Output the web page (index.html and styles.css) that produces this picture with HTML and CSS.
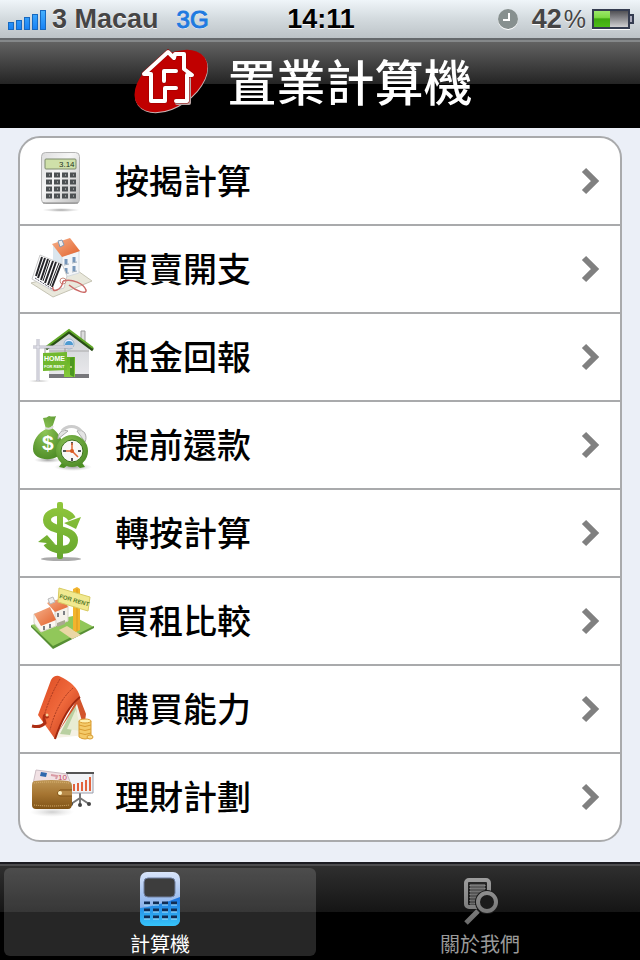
FILE: index.html
```
<!DOCTYPE html>
<html lang="zh-Hant">
<head>
    <meta charset="utf-8">
    <meta name="viewport" content="width=device-width, initial-scale=1">
    <title>置業計算機</title>
    <link rel="stylesheet" href="styles.css">
</head>
<body>
    <div class="status-bar">
        <div class="status-left">
            <svg class="signal" width="38" height="21" viewBox="0 0 38 21">
                <g fill="url(#signalFill)" stroke="#1769c0">
                    <rect x=".5" y="13.500" width="5" height="7"/>
                    <rect x="8.500" y="11.500" width="5" height="9"/>
                    <rect x="16.500" y="8.500" width="5" height="12"/>
                    <rect x="24.500" y="5.500" width="5" height="15"/>
                    <rect x="32.500" y="1.500" width="5" height="19"/>
                </g>
                <defs><linearGradient id="signalFill" gradientUnits="userSpaceOnUse" x1="0" y1="0" x2="0" y2="21"><stop offset="0" stop-color="#49b4ff"/><stop offset="1" stop-color="#1680f4"/></linearGradient></defs>
            </svg>
            <div class="carrier">3 Macau<span class="network">3G</span></div>
        </div>
        <div class="status-time">14:11</div>
        <div class="status-right">
            <svg width="20" height="21" viewBox="0 0 20 21">
                <circle cx="10" cy="11" r="10" fill="#fff"/>
                <circle cx="10" cy="10" r="10" fill="#87908f"/>
                <path d="M11 4v7H5" fill="none" stroke="#fff" stroke-width="2"/>
            </svg>
            <span class="battery-level">42<span class="percent">%</span></span>
            <svg class="battery" width="42" height="21" viewBox="0 0 42 21">
                <defs>
                    <linearGradient id="batGreen" x1="0" y1="0" x2="0" y2="1"><stop offset="0" stop-color="#9be76a"/><stop offset=".4" stop-color="#7fdc44"/><stop offset=".5" stop-color="#3ea90f"/><stop offset="1" stop-color="#4dbd18"/></linearGradient>
                    <linearGradient id="batGray" x1="0" y1="0" x2="0" y2="1"><stop offset="0" stop-color="#4a4a4e"/><stop offset=".5" stop-color="#8e8e92"/><stop offset="1" stop-color="#d8d8da"/></linearGradient>
                </defs>
                <rect x="1" y="1" width="36" height="18" fill="url(#batGray)" stroke="#343c50" stroke-width="2"/>
                <rect x="2" y="2" width="16" height="16" fill="url(#batGreen)"/>
                <path d="M38 6h3v8h-3" fill="#aab" stroke="#343c50" stroke-width="2"/>
                <path d="M0 20.500h38" stroke="#fff"/>
            </svg>
        </div>
    </div>

    <header class="title-bar">
        <svg width="80" height="72" viewBox="0 0 80 72">
            <ellipse cx="40.500" cy="38" rx="41" ry="25" transform="rotate(-35 40.500 38)" fill="#c9b5b5"/>
            <ellipse cx="40" cy="37" rx="41" ry="25" transform="rotate(-35 40 37)" fill="#c00000"/>
            <g fill="none" stroke-linejoin="round" stroke-linecap="round">
                <path d="M46 59h12V33" stroke="#b9a5a5" stroke-width="4"/>
                <g stroke="#900" stroke-width="5">
                    <path d="M45 44H34v13H20V30h-7L37 8l6 6 1-4h9v15l8 6h-5v26H45"/>
                    <path d="M45 27H33v10"/>
                </g>
                <g stroke="#fff" stroke-width="4">
                    <path d="M45 44H34v13H20V30h-7L37 8l6 6 1-4h9v15l8 6h-5v26H45"/>
                    <path d="M45 27H33v10"/>
                </g>
            </g>
        </svg>
        <h1>置業計算機</h1>
    </header>

    <main>
        <ul class="menu">
            <li><a href="#">
                <svg class="icon" viewBox="0 0 64 64">
                    <defs>
                        <linearGradient id="calcBody" x1="0" y1="0" x2="1" y2="1"><stop offset="0" stop-color="#ddd"/><stop offset=".4" stop-color="#f6f6f6"/><stop offset="1" stop-color="#bdbdbd"/></linearGradient>
                        <radialGradient id="shade"><stop offset="0" stop-color="#777" stop-opacity=".7"/><stop offset="1" stop-color="#aaa" stop-opacity="0"/></radialGradient>
                    </defs>
                    <ellipse cx="30" cy="61" rx="19" ry="2" fill="url(#shade)"/>
                    <rect x="10.500" y="3.500" width="38" height="51" rx="4" fill="url(#calcBody)" stroke="#b5b5b5"/>
                    <path d="M12 54h35" stroke="#888"/>
                    <rect x="14" y="10" width="31" height="10" rx="1" fill="#cfe0a9" stroke="#7c8a6c"/>
                    <text x="28" y="18" class="lcd">3.14</text>
                    <g stroke="#4c5052" stroke-width="5" stroke-dasharray="6 2">
                        <path d="M15 26h30M15 33h30M15 40h30M15 47h30"/>
                    </g>
                    <g stroke="#ccc" stroke-width="1" stroke-dasharray="1 7">
                        <path d="M18 26h27M18 33h27M18 40h27M18 47h27"/>
                    </g>
                </svg>
                <span>按揭計算</span>
                <svg class="chevron" viewBox="0 0 18 26"><path d="M2 2l11 11L2 24"/></svg>
            </a></li>
            <li><a href="#">
                <svg class="icon" viewBox="0 0 64 64">
                    <defs><linearGradient id="roof" x1="0" y1="0" x2="1" y2="1"><stop offset="0" stop-color="#f6b08a"/><stop offset="1" stop-color="#e2622c"/></linearGradient></defs>
                    <path d="M0 46l22 14 39-16-14-10z" fill="#e9e8dc" stroke="#c6c4b4"/>
                    <path d="M22 8v18l9 14V19z" fill="#dbe6ee"/>
                    <path d="M31 19l17-5v22l-17 5z" fill="#f3f5f8" stroke="#d3dae0"/>
                    <path d="M21 7l18-6 10 13-18 6z" fill="url(#roof)"/>
                    <path d="M27 4l4-1 2 5-4 2z" fill="#eee" stroke="#8499b5"/>
                    <path d="M35 22v5M43 20v5M35 31v5M43 29v5" stroke="#7696b9" stroke-width="3"/>
                    <path d="M33 28l5-1M41 26l5-1M33 37l5-1M41 35l5-1" stroke="#9cabba"/>
                    <path d="M9 18l22 9 5 12-3 12-11 3L1 42z" fill="#fff" stroke="#ccc"/>
                    <path d="M11 20L5 39M14 21L7 41M17 22L10 43M22 24L14 46M25 25L17 48M30 27L21 50" stroke="#242428" stroke-width="2"/>
                    <path d="M19 23l-7 21M28 26l-9 23" stroke="#242428"/>
                    <path d="M4 41l17 11" stroke="#556" stroke-dasharray="2 1"/>
                    <circle cx="32" cy="44" r="3" fill="#fff" stroke="#c98d80"/>
                    <path d="M32 44c-1 10-12 12-10 6M32 44c9-3 21 3 23 9 1 5-10 1-17-5" fill="none" stroke="#cc6b68" stroke-width="1.500"/>
                </svg>
                <span>買賣開支</span>
                <svg class="chevron" viewBox="0 0 18 26"><path d="M2 2l11 11L2 24"/></svg>
            </a></li>
            <li><a href="#">
                <svg class="icon" viewBox="0 0 64 64">
                    <defs>
                        <linearGradient id="wall" x1="0" y1="0" x2="0" y2="1"><stop offset="0" stop-color="#cdd0d4"/><stop offset="1" stop-color="#e9e9ec"/></linearGradient>
                        <linearGradient id="green" x1="0" y1="0" x2="0" y2="1"><stop offset="0" stop-color="#64b01f"/><stop offset="1" stop-color="#86cb3c"/></linearGradient>
                    </defs>
                    <ellipse cx="8" cy="56" rx="12" ry="1" fill="url(#shade)"/>
                    <path d="M50 6h4v14l-4-4z" fill="#ddd" stroke="#999"/>
                    <path d="M18 23L38 7l20 16v28H18z" fill="url(#wall)"/>
                    <path d="M18 26h40" stroke="#aaa"/>
                    <path d="M18 49h40v4H18z" fill="#77777b"/>
                    <path d="M15 24L38 7l24 18" fill="none" stroke="#284e16" stroke-width="3"/>
                    <path d="M15 22L38 5l24 18" fill="none" stroke="#61a828" stroke-width="2"/>
                    <circle cx="38" cy="19" r="5" fill="#eef" stroke="#94b5cc"/>
                    <path d="M34 20a4 4 0 0 1 8 0z" fill="#4e9bd0"/>
                    <path d="M33 32h11v20H33z" fill="url(#green)"/>
                    <path d="M39 33l4-1v20l-4-2z" fill="#4c9720"/>
                    <circle cx="40" cy="42" r="1" fill="#dd9"/>
                    <path d="M7 14v42M2 22h40" stroke="#b6b6c2" stroke-width="3"/>
                    <path d="M7 14v42M2 22h40" stroke="#eeeef5"/>
                    <path d="M14 23v5M34 23v5" stroke="#999"/>
                    <path d="M12 28l24-1v18l-24 1z" fill="#71b82e"/>
                    <text x="13" y="36" class="home-text">HOME</text>
                    <text x="13" y="43" class="rent-text">FOR RENT</text>
                </svg>
                <span>租金回報</span>
                <svg class="chevron" viewBox="0 0 18 26"><path d="M2 2l11 11L2 24"/></svg>
            </a></li>
            <li><a href="#">
                <svg class="icon" viewBox="0 0 64 64">
                    <defs>
                        <radialGradient id="bag" cx=".4" cy=".35" r=".7"><stop offset="0" stop-color="#8fc657"/><stop offset="1" stop-color="#4d8b26"/></radialGradient>
                    </defs>
                    <ellipse cx="17" cy="47" rx="14" ry="3" fill="url(#shade)"/>
                    <ellipse cx="42" cy="54" rx="19" ry="4" fill="url(#shade)"/>
                    <path d="M12 5q4 0 6-2 4 1 7 0l-4 12c6 4 11 12 11 19 0 16-30 16-30 2 0-9 5-16 13-20z" fill="url(#bag)"/>
                    <path d="M14 15q6 2 8-2" fill="none" stroke="#ddd" stroke-width="2"/>
                    <text x="11" y="37" class="bag-dollar">$</text>
                    <g fill="#e4e4e4" stroke="#aaa">
                        <path d="M27 26c0-7 5-10 10-8zM46 18c7-3 11 5 8 11z"/>
                        <path d="M31 18c5-6 14-6 19 0" fill="none" stroke="#ccc" stroke-width="3"/>
                    </g>
                    <path d="M28 54l4-6 5 4-4 3zM54 54l-4-6-5 4 4 3z" fill="#4c9022"/>
                    <circle cx="41" cy="38" r="16" fill="url(#bag)"/>
                    <circle cx="41" cy="38" r="11" fill="#f8f8f6" stroke="#39721a"/>
                    <path d="M41 29v3M41 45v3M32 38h3M47 38h3" stroke="#555" stroke-width="2"/>
                    <path d="M41 38V30M41 38l6 6M41 38h-6" stroke="#df6836" stroke-width="1.500"/>
                    <circle cx="41" cy="38" r="2" fill="#d85a20"/>
                </svg>
                <span>提前還款</span>
                <svg class="chevron" viewBox="0 0 18 26"><path d="M2 2l11 11L2 24"/></svg>
            </a></li>
            <li><a href="#">
                <svg class="icon" viewBox="0 0 64 64">
                    <defs><linearGradient id="dollar" gradientUnits="userSpaceOnUse" x1="0" y1="0" x2="0" y2="60"><stop offset="0" stop-color="#92c83c"/><stop offset="1" stop-color="#63a42d"/></linearGradient></defs>
                    <ellipse cx="30" cy="58" rx="20" ry="2" fill="#aaa"/>
                    <rect x="26" y="1" width="6" height="57" rx="2" fill="url(#dollar)"/>
                    <path d="M41 18C36 8 16 9 16 19c0 12 27 8 27 20 0 13-21 12-27 3" fill="none" stroke="url(#dollar)" stroke-width="8"/>
                    <path d="M33 22l17-6-5 12zM7 41l9-7 8 9z" fill="url(#dollar)"/>
                </svg>
                <span>轉按計算</span>
                <svg class="chevron" viewBox="0 0 18 26"><path d="M2 2l11 11L2 24"/></svg>
            </a></li>
            <li><a href="#">
                <svg class="icon" viewBox="0 0 64 64">
                    <path d="M0 36l22 23 41-21-21-11z" fill="#91c75a"/>
                    <path d="M0 36l22 21 41-20v2L22 60 0 38z" fill="#578f34"/>
                    <path d="M28 41l8-4 14 9-9 4z" fill="#ead7a5"/>
                    <path d="M17 13l7 9v15l13-5V17l-5-6z" fill="#f4f1ea" stroke="#d8d2c8"/>
                    <path d="M3 25v9l7 9 15-6V31L19 20z" fill="#faf7f1" stroke="#d8d2c8"/>
                    <path d="M3 25l16-7 6 13-15 6z" fill="url(#roof)"/>
                    <path d="M16 14l15-5 6 9-13 5z" fill="url(#roof)"/>
                    <path d="M17 10l5-2 2 5-5 2z" fill="#eee" stroke="#bbb"/>
                    <path d="M13 37v4M19 35v4M27 24v4M33 22v4" stroke="#7c8085" stroke-width="2"/>
                    <path d="M26 34l8-3v4l-8 3z" fill="#aaa890"/>
                    <path d="M42 0l4-2 3 2v41l-4 2-3-2z" fill="#f2b42d"/>
                    <path d="M46 0v42" stroke="#d99820"/>
                    <path d="M28-1l31 9-2 14-30-9z" fill="#f1e990" stroke="#d8cb62"/>
                    <text x="28" y="9" class="sale-text" transform="rotate(16 28 9)">FOR RENT</text>
                </svg>
                <span>買租比較</span>
                <svg class="chevron" viewBox="0 0 18 26"><path d="M2 2l11 11L2 24"/></svg>
            </a></li>
            <li><a href="#">
                <svg class="icon" viewBox="0 0 64 64">
                    <defs><linearGradient id="purse" x1="0" y1="0" x2="1" y2="1"><stop offset="0" stop-color="#d94820"/><stop offset=".5" stop-color="#f0693c"/><stop offset="1" stop-color="#b52f12"/></linearGradient></defs>
                    <path d="M24 61l25-39 6 36z" fill="#f4f1e4"/>
                    <path d="M29 57l15-30 2 8-7 23z" fill="#b9d0a1"/>
                    <path d="M36 52l9-20 5 22z" fill="#e8ecd2"/>
                    <path d="M48 19l7 18-2 14-7-24-20 30z" fill="#d3552c"/>
                    <path d="M20 3q3-5 8-4 18 8 21 21-15 12-25 42L7 38z" fill="url(#purse)"/>
                    <path d="M49 20Q34 32 24 62" fill="none" stroke="#a1280e" stroke-width="2"/>
                    <path d="M29 2Q18 20 12 43M42 11Q26 25 19 53" fill="none" stroke="#a83a20" stroke-dasharray="2 1"/>
                    <path d="M17 41q-4-6-4 1l1 4q-4 5-13 3" fill="none" stroke="#ad2e14" stroke-width="3"/>
                    <circle cx="16" cy="38" r="1.500" fill="#f6d199"/>
                    <g fill="#f4ca69" stroke="#d99c31">
                        <path d="M48 44h12v16q-6 4-12 0z"/>
                        <ellipse cx="54" cy="44" rx="6" ry="2" fill="#fff0b0"/>
                        <path d="M48 48q6 3 12 0M48 52q6 3 12 0M48 56q6 3 12 0" fill="none"/>
                        <ellipse cx="59" cy="60" rx="3" ry="2" fill="#f9dc8c"/>
                    </g>
                </svg>
                <span>購買能力</span>
                <svg class="chevron" viewBox="0 0 18 26"><path d="M2 2l11 11L2 24"/></svg>
            </a></li>
            <li><a href="#">
                <svg class="icon" viewBox="0 0 64 64">
                    <defs><linearGradient id="wallet" x1="0" y1="0" x2="0" y2="1"><stop offset="0" stop-color="#bd9554"/><stop offset=".5" stop-color="#a57431"/><stop offset="1" stop-color="#805316"/></linearGradient></defs>
                    <ellipse cx="21" cy="47" rx="22" ry="5" fill="url(#shade)" opacity=".5"/>
                    <path d="M49 28v5l-9 6M49 33l9 6M49 32v7" fill="none" stroke="#777" stroke-width="2"/>
                    <circle cx="40" cy="39" r="2" fill="#444"/><circle cx="49" cy="40" r="2" fill="#444"/><circle cx="58" cy="39" r="2" fill="#444"/>
                    <path d="M36 8h26v20H36z" fill="#f2f3f6" stroke="#999caa"/>
                    <path d="M35 8h28" stroke="#555" stroke-width="2"/>
                    <path d="M43 26v-7M47 26v-8M51 26v-9M55 26V15M59 26V12" stroke="#e2633e" stroke-width="2"/>
                    <path d="M5 5l31 4 4 10H2z" fill="#f1e1e4" stroke="#cdbec4"/>
                    <path d="M10 7l6 1-1 4-6-1z" fill="#2e68ad"/>
                    <path d="M20 10l6 1-1 3" fill="none" stroke="#d99aa5" stroke-width="2"/>
                    <text x="27" y="15" class="note-text">10</text>
                    <path d="M3 16q18-2 34 0 4 1 4 5v18q0 5-4 5H5q-4 0-4-4V20q0-3 2-4z" fill="url(#wallet)"/>
                    <path d="M3 40q17 2 36 0M3 18q17-2 35 0" fill="none" stroke="#ddb879" stroke-dasharray="1 1"/>
                    <path d="M41 25H29q-5 4 0 6h12" fill="#b88a48" stroke="#805316"/>
                    <circle cx="29" cy="28" r="2" fill="#fff5ca"/>
                </svg>
                <span>理財計劃</span>
                <svg class="chevron" viewBox="0 0 18 26"><path d="M2 2l11 11L2 24"/></svg>
            </a></li>
        </ul>
    </main>

    <nav class="tab-bar">
        <a class="tab active" href="#">
            <svg width="42" height="56" viewBox="0 0 42 56">
                <defs>
                    <linearGradient id="tabTop" x1="0" y1="0" x2="0" y2="1"><stop offset="0" stop-color="#d9e4fa"/><stop offset="1" stop-color="#5e95e2"/></linearGradient>
                    <linearGradient id="tabBottom" x1="0" y1="0" x2="0" y2="1"><stop offset="0" stop-color="#1c71df"/><stop offset="1" stop-color="#36c4f9"/></linearGradient>
                </defs>
                <rect x="1" y="1" width="40" height="54" rx="7" fill="url(#tabTop)"/>
                <path d="M1 37q18-2 40-11v22q0 7-7 7H8q-7 0-7-7z" fill="url(#tabBottom)"/>
                <rect x="5" y="7" width="31" height="19" rx="4" fill="#3d3d3d" stroke="#7180a0"/>
                <path d="M5 32h33M5 39h33M5 46h33" stroke="#102c55" stroke-width="3" stroke-dasharray="6 3"/>
                <path d="M5 34h33M5 41h33M5 48h33" stroke="#a8e2ff" stroke-dasharray="6 3"/>
            </svg>
            <span>計算機</span>
        </a>
        <a class="tab" href="#">
            <svg width="42" height="56" viewBox="0 0 42 56">
                <defs><linearGradient id="tabGray" gradientUnits="userSpaceOnUse" x1="0" y1="5" x2="0" y2="56"><stop offset="0" stop-color="#a0a0a0"/><stop offset="1" stop-color="#686868"/></linearGradient></defs>
                <g fill="none" stroke="url(#tabGray)">
                    <rect x="7" y="9" width="23" height="27" rx="3" stroke-width="4"/>
                    <path d="M11 14h15v1H11zM11 17h15v1H11zM11 20h15v1H11zM11 23h11v1H11zM11 26h8v1h-8zM11 29h6v1h-6zM11 32h5v1h-5z"/>
                    <circle cx="28" cy="31" r="10" fill="#1b1b1b" stroke="#1b1b1b" stroke-width="4"/>
                    <circle cx="28" cy="31" r="9" stroke-width="4"/>
                    <path d="M19 40L7 52" stroke-width="5"/>
                </g>
            </svg>
            <span>關於我們</span>
        </a>
    </nav>
</body>
</html>
```

FILE: styles.css
```
* { box-sizing: border-box; }
body {
    margin: 0;
    min-height: 100vh;
    display: flex;
    flex-direction: column;
    background: #ebeff7;
    font-family: "Liberation Sans", "Noto Sans CJK TC", sans-serif;
}
svg { display: block; flex: none; overflow: visible; }
a { color: inherit; text-decoration: none; }

.status-bar {
    height: 40px;
    padding: 0 6px 0 8px;
    display: grid;
    grid-template-columns: 1fr auto 1fr;
    align-items: center;
    background: linear-gradient(#eff5f9, #d3dade 50%, #bcc3c7);
    border-bottom: 2px solid #65696c;
    font-size: 27px;
    line-height: 30px;
    font-weight: bold;
    color: #454545;
    text-shadow: 0 1px 0 #fff;
}
.status-left, .status-right { display: flex; align-items: center; }
.status-left { gap: 6px; }
.status-right { justify-content: flex-end; gap: 6px; }
.status-time { color: #000; }
.network { margin-left: 18px; font-size: 24px; font-weight: normal; color: #1e7ae0; -webkit-text-stroke: 1px #1e7ae0; }
.battery-level { margin-left: 8px; }
.percent { margin-left: 2px; font-size: 25px; font-weight: normal; }

.title-bar {
    height: 88px;
    padding: 0 36px 10px 0;
    display: flex;
    justify-content: center;
    align-items: center;
    gap: 16px;
    background: linear-gradient(#626262, #242424 42px, #000 42px);
    border-top: 2px solid #85888a;
    color: #fff;
}
.title-bar h1 { margin: 0; font-size: 49px; line-height: 72px; font-weight: 500; font-family: "Noto Sans CJK TC", sans-serif; }

main { flex: 1; padding: 8px 18px 20px; }
.menu {
    margin: 0;
    padding: 0;
    list-style: none;
    background: #fff;
    border: 2px solid #a9aaac;
    border-radius: 22px;
}
.menu li + li { border-top: 2px solid #a9aaac; }
.menu a {
    height: 86px;
    padding: 0 20px 0 11px;
    display: flex;
    align-items: center;
    gap: 20px;
    font-family: "Noto Sans CJK TC", sans-serif;
    font-size: 34px;
    line-height: 48px;
    font-weight: 500;
    color: #000;
}
.menu span { flex: 1; padding-bottom: 2px; }
.icon { width: 64px; height: 64px; }
.chevron { width: 18px; height: 26px; }
.chevron path { fill: none; stroke: #808080; stroke-width: 6; }

.lcd { font: 8px "Liberation Sans", sans-serif; fill: #26301d; }
.home-text { font: bold 7px "Liberation Sans", sans-serif; fill: #fff; }
.rent-text { font: bold 4px "Liberation Sans", sans-serif; fill: #fff; }
.bag-dollar { font: bold 21px "Liberation Sans", sans-serif; fill: #fff; }
.sale-text { font: bold 6px "Liberation Sans", sans-serif; fill: #56792b; }
.note-text { font: 8px "Liberation Sans", sans-serif; fill: #c54a5d; }

.tab-bar {
    height: 98px;
    display: flex;
    background: linear-gradient(#303030, #151515 48px, #000 48px);
    border-top: 2px solid #1c1c22;
    box-shadow: inset 0 2px 0 #4c4c4e;
}
.tab {
    flex: 1;
    margin: 4px;
    padding-top: 3px;
    display: flex;
    flex-direction: column;
    align-items: center;
    gap: 4px;
    border-radius: 6px;
    font-family: "Noto Sans CJK TC", sans-serif;
    font-size: 20px;
    line-height: 26px;
    color: #999;
}
.tab.active { background: rgba(255, 255, 255, .15); color: #fff; }
```
